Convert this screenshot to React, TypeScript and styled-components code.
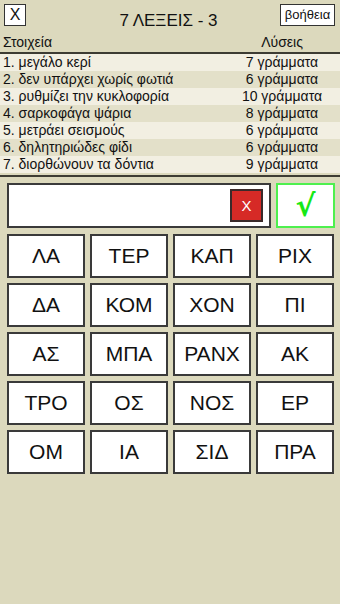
import React from "react";
import styled, { createGlobalStyle } from "styled-components";

const Global = createGlobalStyle`
  * { box-sizing: border-box; }
  html, body { margin: 0; padding: 0; background: #dcd9bd; }
  body { font-family: "Liberation Sans", Arial, sans-serif; color: #111; }
`;

const Page = styled.div`
  width: 340px;
  min-height: 604px;
  background: #dcd9bd;
  display: flex;
  flex-direction: column;
`;

const TopBar = styled.div`
  height: 31px;
  display: grid;
  grid-template-columns: 60px 1fr 60px;
  align-items: start;
  padding: 4px 5px 0 4px;
`;

const CloseButton = styled.button`
  width: 22px;
  height: 22px;
  padding: 0;
  background: #fff;
  border: 1px solid #333;
  font-family: "Liberation Sans", Arial, sans-serif;
  font-size: 16px;
  line-height: 20px;
  color: #111;
`;

const Title = styled.div`
  text-align: center;
  font-size: 17px;
  line-height: 20px;
  padding-top: 7px;
  margin-left: -2px;
`;

const HelpButton = styled.button`
  justify-self: end;
  width: 55px;
  height: 22px;
  padding: 0;
  background: #fff;
  border: 1px solid #333;
  font-family: "Liberation Sans", Arial, sans-serif;
  font-size: 13px;
  line-height: 20px;
  color: #111;
`;

const ListHeader = styled.div`
  height: 21px;
  display: grid;
  grid-template-columns: 1fr 116px;
  align-items: center;
  font-size: 14px;
  padding-left: 3px;
`;

const HeaderRight = styled.span`
  text-align: center;
`;

const Divider = styled.div`
  height: 2px;
  background: #3d3c33;
`;

const List = styled.div`
  display: flex;
  flex-direction: column;
  padding-bottom: 2px;
`;

const Row = styled.div<{ $alt: boolean }>`
  height: 17px;
  display: grid;
  grid-template-columns: 1fr 116px;
  align-items: center;
  font-size: 14px;
  line-height: 17px;
  padding-left: 3px;
  background: ${(p) => (p.$alt ? "#e3e0c9" : "#f2efe2")};
`;

const Count = styled.span`
  text-align: center;
`;

const InputRow = styled.div`
  display: flex;
  gap: 5px;
  padding: 6px 5px 0 7px;
`;

const AnswerBox = styled.div`
  width: 264px;
  height: 45px;
  background: #fff;
  border: 2px solid #3a3a3a;
  display: flex;
  justify-content: flex-end;
  align-items: center;
  padding-right: 6px;
`;

const ClearButton = styled.button`
  width: 33px;
  height: 33px;
  padding: 0;
  background: #d62a26;
  border: 2px solid #3a2a2a;
  color: #fff;
  font-family: "Liberation Sans", Arial, sans-serif;
  font-size: 15px;
  line-height: 29px;
`;

const CheckButton = styled.button`
  width: 59px;
  height: 45px;
  padding: 0;
  background: #fff;
  border: 2px solid #4ef04e;
  color: #16e816;
  font-family: "DejaVu Sans", "Liberation Sans", sans-serif;
  font-size: 30px;
  font-weight: bold;
  line-height: 41px;
`;

const KeyGrid = styled.div`
  display: grid;
  grid-template-columns: repeat(4, 78px);
  grid-auto-rows: 44px;
  gap: 5px;
  padding: 6px 0 0 7px;
`;

const Key = styled.button`
  background: #fff;
  border: 2px solid #3a3a3a;
  padding: 0;
  font-family: "Liberation Sans", Arial, sans-serif;
  font-size: 21px;
  color: #111;
`;

const clues = [
  ["1. μεγάλο κερί", "7 γράμματα"],
  ["2. δεν υπάρχει χωρίς φωτιά", "6 γράμματα"],
  ["3. ρυθμίζει την κυκλοφορία", "10 γράμματα"],
  ["4. σαρκοφάγα ψάρια", "8 γράμματα"],
  ["5. μετράει σεισμούς", "6 γράμματα"],
  ["6. δηλητηριώδες φίδι", "6 γράμματα"],
  ["7. διορθώνουν τα δόντια", "9 γράμματα"],
];

const keys = [
  "ΛΑ", "ΤΕΡ", "ΚΑΠ", "ΡΙΧ",
  "ΔΑ", "ΚΟΜ", "ΧΟΝ", "ΠΙ",
  "ΑΣ", "ΜΠΑ", "ΡΑΝΧ", "ΑΚ",
  "ΤΡΟ", "ΟΣ", "ΝΟΣ", "ΕΡ",
  "ΟΜ", "ΙΑ", "ΣΙΔ", "ΠΡΑ",
];

export default function App() {
  return (
    <Page>
      <Global />
      <TopBar>
        <CloseButton>X</CloseButton>
        <Title>7 ΛΕΞΕΙΣ - 3</Title>
        <HelpButton>βοήθεια</HelpButton>
      </TopBar>
      <ListHeader>
        <span>Στοιχεία</span>
        <HeaderRight>Λύσεις</HeaderRight>
      </ListHeader>
      <Divider />
      <List>
        {clues.map(([c, n], i) => (
          <Row key={i} $alt={i % 2 === 1}>
            <span>{c}</span>
            <Count>{n}</Count>
          </Row>
        ))}
      </List>
      <Divider />
      <InputRow>
        <AnswerBox>
          <ClearButton>X</ClearButton>
        </AnswerBox>
        <CheckButton>√</CheckButton>
      </InputRow>
      <KeyGrid>
        {keys.map((k) => (
          <Key key={k}>{k}</Key>
        ))}
      </KeyGrid>
    </Page>
  );
}
